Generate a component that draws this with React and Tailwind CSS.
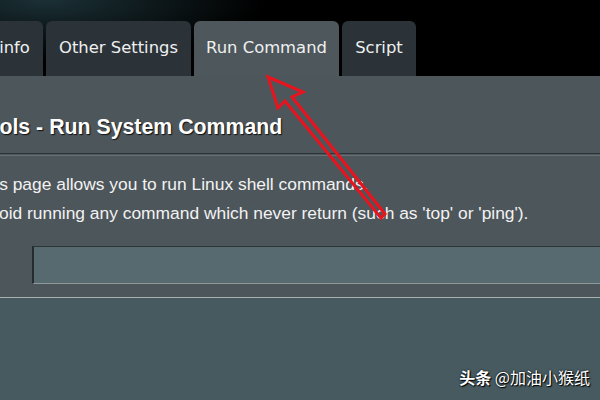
const tabs = [
  { label: 'info', w: 'w-[57px]', active: false },
  { label: 'Other Settings', w: 'w-[145px]', active: false },
  { label: 'Run Command', w: 'w-[145px]', active: true },
  { label: 'Script', w: 'w-[74px]', active: false },
];

function Arrow() {
  // red hollow arrow pointing at the active tab
  return (
    <svg className="absolute inset-0 pointer-events-none" width="600" height="400" viewBox="0 0 600 400">
      <polygon
        points="268,77 303,92 292,97 385,214 381,218 285,101 278,108"
        fill="none"
        stroke="#e8131d"
        strokeWidth="3"
        strokeLinejoin="miter"
      />
    </svg>
  );
}

export default function App() {
  return (
    <div className="relative w-[600px] h-[400px] overflow-hidden bg-[#465a5f] font-['Liberation_Sans',Arial,sans-serif]">
      {/* tab strip */}
      <div className="h-[76px] bg-[radial-gradient(ellipse_220px_60px_at_60px_0px,#1b3036,#000)] flex items-end gap-[3px] ml-[-14px]">
        {tabs.map((t) => (
          <div
            key={t.label}
            className={`${t.w} h-[55px] shrink-0 rounded-t-[6px] flex items-center justify-center text-[16.4px] text-[#eef0f0] font-['DejaVu_Sans',Verdana,sans-serif] ${
              t.active ? 'bg-[#4e575c]' : 'bg-[#2c3338]'
            }`}
          >
            {t.label}
          </div>
        ))}
      </div>

      {/* panel */}
      <div className="bg-[#4d565b] border-b border-[#a9b0b1]">
        <div className="pt-[39px] mb-[14px] ml-[-25px] text-[21.3px] leading-[24px] font-bold text-white whitespace-nowrap [text-shadow:1px_1px_1px_#111]">
          Tools - Run System Command
        </div>
        <div className="h-[1px] bg-[#2f3538]" />
        <div className="h-[1px] mt-[1px] bg-[#667075]" />
        <div className="pt-[14px] text-[17.4px] leading-[29px] text-[#f2f2f2] whitespace-nowrap">
          <div className="ml-[-25px]">This page allows you to run Linux shell commands.</div>
          <div className="ml-[-21px]">Avoid running any command which never return (such as 'top' or 'ping').</div>
        </div>
        <div className="mt-[18px] pb-[13px] pl-[32px]">
          <div className="h-[38px] bg-[#566a6f] border-t border-l-2 border-b border-t-[#2c3437] border-l-[#262c2e] border-b-[#8e999c]" />
        </div>
      </div>

      {/* watermark */}
      <div className="absolute right-[10px] bottom-[11px] text-[16px] text-white font-['Noto_Sans_CJK_SC',sans-serif] [text-shadow:0_0_2px_#000,1px_1px_1px_#000] whitespace-nowrap">
        <span className="font-bold">头条</span> @加油小猴纸
      </div>

      <Arrow />
    </div>
  );
}
